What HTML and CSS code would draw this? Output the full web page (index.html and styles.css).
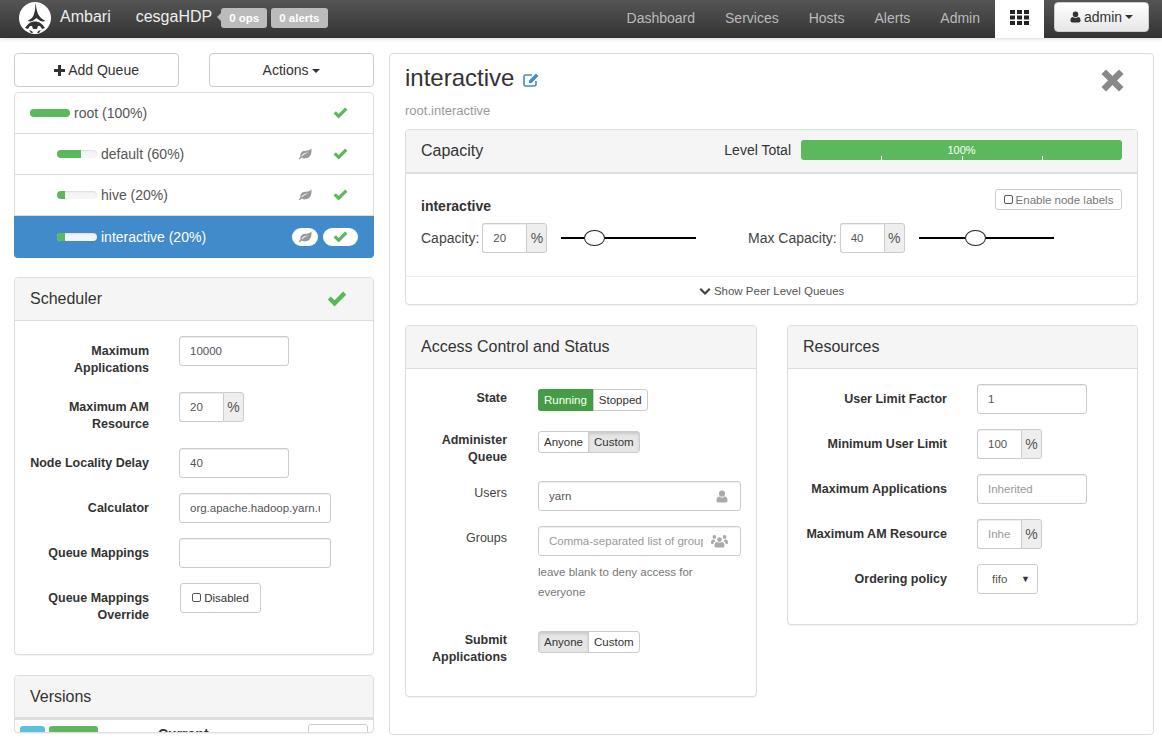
FILE: index.html
```html
<!DOCTYPE html>
<html lang="en">
<head>
  <meta charset="UTF-8">
  <title>Ambari - Capacity Scheduler</title>
  <link rel="stylesheet" href="styles.css">
</head>
<body>

  <svg class="defs" width="0" height="0">
    <symbol id="i-check" viewBox="0 0 16 13"><path d="M0.5 7l2.5-2.5 3 3 7-7L15.5 3 6 12.5z"/></symbol>
    <symbol id="i-leaf" viewBox="0 0 16 14"><path d="M15.5 0.5c0.6 5-0.8 11-7 11.6-1.7 0.2-3.3-0.3-4.4-1L2 13.2 0.6 12.2l2.2-2.4C1.8 7.5 3.5 4.3 6.6 3.6c3.2-0.7 6.6-0.4 8.9-3.1zM4.6 9.6c2-2.2 4.2-3.4 7-4.2-3-0.1-5.7 1.2-7.8 3.5z"/></symbol>
    <symbol id="i-user" viewBox="0 0 12 13"><path d="M6 0.5a3 3 0 0 1 3 3.2 3 3 0 0 1-6 0A3 3 0 0 1 6 0.5zM3.2 6.6C4 7.3 5 7.7 6 7.7s2-0.4 2.8-1.1c1.8 0.2 2.7 1.6 2.7 3.8 0 1.4-0.8 2.1-2 2.1h-7c-1.2 0-2-0.7-2-2.1 0-2.2 0.9-3.6 2.7-3.8z"/></symbol>
    <symbol id="i-users" viewBox="0 0 17 14"><path d="M8.5 3.2a2.4 2.4 0 1 1 0 4.8 2.4 2.4 0 0 1 0-4.8zM3.4 1a1.9 1.9 0 1 1 0 3.8 1.9 1.9 0 0 1 0-3.8zM13.6 1a1.9 1.9 0 1 1 0 3.8 1.9 1.9 0 0 1 0-3.8zM6 8c0.7 0.5 1.6 0.8 2.5 0.8S10.300 8.500 11 8c1.700 0.100 2.500 1.300 2.500 3.400 0 1.400-0.800 2.100-2 2.100h-6c-1.200 0-2-0.700-2-2.100C3.500 9.300 4.300 8.100 6 8zM2.200 5.500c0.500 0.300 1.200 0.500 1.800 0.500-0.200 0.500-0.100 1 0.200 1.500C3.200 7.800 2.500 8.700 2.300 10H1.300C0.500 10 0 9.500 0 8.500 0 6.800 0.700 5.700 2.200 5.500zM14.800 5.500C16.300 5.700 17 6.800 17 8.500c0 1-0.500 1.500-1.300 1.500h-1c-0.200-1.300-0.900-2.200-1.900-2.500 0.300-0.500 0.400-1 0.200-1.500 0.600 0 1.300-0.200 1.800-0.500z"/></symbol>
    <symbol id="i-down" viewBox="0 0 12 9"><path d="M0.500 2.500L2 1l4 4 4-4 1.500 1.500L6 8z"/></symbol>
  </svg>

  <nav class="navbar">
    <svg class="logo" viewBox="0 0 32 32" width="32" height="32">
      <circle cx="16" cy="16" r="16" fill="#fff"/>
      <path d="M16.500 1l1.200 7 1.300 4c1.500 3 4 5 7.500 7-2 0.500-3.500 0.500-5 0l-4-3-4 3c-1.500 0.500-3 0.500-5 0 3.500-2 6-4 6.500-7l1-4z" fill="#333"/>
      <path d="M6 26c3-4.500 6-6.500 10-6.500S23 21.500 26 26l-3 1-2-3h-2l-1 3h-4l-1-3h-2l-2 3z" fill="#333"/>
      <path d="M10 28l3 1 1 2h-2zM22 28l-3 1-1 2h2z" fill="#444"/>
    </svg>
    <a class="brand">Ambari</a>
    <a class="cluster">cesgaHDP</a>
    <span class="ops-badge arrow">0 ops</span>
    <span class="ops-badge">0 alerts</span>

    <ul class="nav-links">
      <li><a>Dashboard</a></li>
      <li><a>Services</a></li>
      <li><a>Hosts</a></li>
      <li><a>Alerts</a></li>
      <li><a>Admin</a></li>
      <li class="active">
        <a>
          <svg class="grid-icon" viewBox="0 0 19 15" width="19" height="15">
            <path d="M0 0h5v4H0zM7 0h5v4H7zM14 0h5v4h-5zM0 5.500h5v4H0zM7 5.500h5v4H7zM14 5.500h5v4h-5zM0 11h5v4H0zM7 11h5v4H7zM14 11h5v4h-5z"/>
          </svg>
        </a>
      </li>
    </ul>
    <button class="admin-btn"><svg class="icon" width="11" height="12"><use href="#i-user"/></svg> admin <span class="caret"></span></button>
  </nav>

  <main class="page">

    <aside class="sidebar">
      <div class="queue-actions">
        <button class="btn">
          <svg class="plus" viewBox="0 0 11 11" width="11" height="11"><path d="M4 0h3v4h4v3H7v4H4V7H0V4h4z"/></svg>
          Add Queue
        </button>
        <button class="btn">Actions <span class="caret"></span></button>
      </div>

      <ul class="queue-list">
        <li class="queue">
          <span class="bar"><span class="bar-fill" style="width: 100%"></span></span>
          <span class="queue-name">root (100%)</span>
          <span class="state"><svg width="15" height="12"><use href="#i-check"/></svg></span>
        </li>
        <li class="queue child">
          <span class="bar"><span class="bar-fill" style="width: 60%"></span></span>
          <span class="queue-name">default (60%)</span>
          <span class="leaf"><svg width="14" height="12"><use href="#i-leaf"/></svg></span>
          <span class="state"><svg width="15" height="12"><use href="#i-check"/></svg></span>
        </li>
        <li class="queue child">
          <span class="bar"><span class="bar-fill" style="width: 20%"></span></span>
          <span class="queue-name">hive (20%)</span>
          <span class="leaf"><svg width="14" height="12"><use href="#i-leaf"/></svg></span>
          <span class="state"><svg width="15" height="12"><use href="#i-check"/></svg></span>
        </li>
        <li class="queue child selected">
          <span class="bar"><span class="bar-fill" style="width: 20%"></span></span>
          <span class="queue-name">interactive (20%)</span>
          <span class="leaf"><svg width="14" height="12"><use href="#i-leaf"/></svg></span>
          <span class="state"><svg width="15" height="12"><use href="#i-check"/></svg></span>
        </li>
      </ul>

      <section class="panel scheduler">
        <header class="panel-head">
          <h3>Scheduler</h3>
          <svg class="head-check" width="20" height="16"><use href="#i-check"/></svg>
        </header>
        <div class="panel-body form-scheduler">
          <div class="row">
            <label>Maximum Applications</label>
            <input class="field" type="text" value="10000">
          </div>
          <div class="row">
            <label>Maximum AM Resource</label>
            <div class="input-group"><input type="text" value="20"><span class="addon">%</span></div>
          </div>
          <div class="row">
            <label>Node Locality Delay</label>
            <input class="field" type="text" value="40">
          </div>
          <div class="row">
            <label>Calculator</label>
            <input class="field wide" type="text" value="org.apache.hadoop.yarn.util.resource.DefaultResourceCalculator">
          </div>
          <div class="row">
            <label>Queue Mappings</label>
            <input class="field wide" type="text">
          </div>
          <div class="row">
            <label>Queue Mappings Override</label>
            <button class="check-btn"><span class="box"></span>Disabled</button>
          </div>
        </div>
      </section>

      <section class="panel versions">
        <header class="panel-head thick"><h3>Versions</h3></header>
        <div class="version-row">
          <span class="tag tag-blue"></span>
          <span class="tag tag-green"></span>
          <span class="version-name">Current</span>
          <button class="version-btn"></button>
        </div>
      </section>
    </aside>

    <section class="queue-detail">
      <div class="detail-head">
        <div>
          <h1>interactive
            <svg class="edit" viewBox="0 0 16 14" width="16" height="14">
              <path d="M13 8v3.500c0 1-0.700 1.500-1.500 1.500h-9C1.500 13 1 12.400 1 11.500v-8C1 2.500 1.600 2 2.500 2H9" fill="none" stroke="#428bca" stroke-width="1.600"/>
              <path d="M13 0.500l2.500 2.500-7 7H6V7.500z" fill="#428bca"/>
            </svg>
          </h1>
          <p class="path">root.interactive</p>
        </div>
        <svg class="close" viewBox="0 0 23 23" width="23" height="23"><path d="M5 0.500l6.500 6.500L18 0.500 22.500 5 16 11.500l6.500 6.500-4.500 4.500-6.500-6.500L5 22.500 0.500 18 7 11.500 0.500 5z"/></svg>
      </div>

      <section class="panel capacity">
        <header class="panel-head capacity-head">
          <h3>Capacity</h3>
          <div class="level-total">
            <span>Level Total</span>
            <div class="level-bar">100%
              <i class="tick t1"></i><i class="tick t2"></i><i class="tick t3"></i>
            </div>
          </div>
        </header>
        <div class="capacity-body">
          <div class="capacity-title">
            <strong>interactive</strong>
            <button class="node-labels"><span class="box"></span>Enable node labels</button>
          </div>
          <div class="sliders">
            <div class="slider-group">
              <span class="slider-label">Capacity:</span>
              <div class="input-group"><input type="text" value="20"><span class="addon">%</span></div>
              <div class="slider"><span class="handle h20"></span></div>
            </div>
            <div class="slider-group second">
              <span class="slider-label">Max Capacity:</span>
              <div class="input-group"><input type="text" value="40"><span class="addon">%</span></div>
              <div class="slider"><span class="handle h40"></span></div>
            </div>
          </div>
        </div>
        <div class="peer-toggle"><svg width="12" height="9"><use href="#i-down"/></svg> Show Peer Level Queues</div>
      </section>

      <div class="detail-columns">
        <section class="panel access">
          <header class="panel-head"><h3>Access Control and Status</h3></header>
          <div class="panel-body form-access">
            <div class="row state-row">
              <label>State</label>
              <div class="toggle"><span class="on-green">Running</span><span>Stopped</span></div>
            </div>
            <div class="row">
              <label>Administer Queue</label>
              <div class="toggle"><span>Anyone</span><span class="on">Custom</span></div>
            </div>
            <div class="row">
              <label class="plain">Users</label>
              <div class="icon-input">
                <input type="text" value="yarn">
                <svg width="12" height="13"><use href="#i-user"/></svg>
              </div>
            </div>
            <div class="row">
              <label class="plain">Groups</label>
              <div>
                <div class="icon-input">
                  <input type="text" placeholder="Comma-separated list of groups">
                  <svg width="17" height="14"><use href="#i-users"/></svg>
                </div>
                <p class="help">leave blank to deny access for everyone</p>
              </div>
            </div>
            <div class="row">
              <label>Submit Applications</label>
              <div class="toggle"><span class="on">Anyone</span><span>Custom</span></div>
            </div>
          </div>
        </section>

        <section class="panel resources">
          <header class="panel-head"><h3>Resources</h3></header>
          <div class="panel-body form-resources">
            <div class="row">
              <label>User Limit Factor</label>
              <input class="field" type="text" value="1">
            </div>
            <div class="row">
              <label>Minimum User Limit</label>
              <div class="input-group"><input type="text" value="100"><span class="addon">%</span></div>
            </div>
            <div class="row">
              <label>Maximum Applications</label>
              <input class="field" type="text" placeholder="Inherited">
            </div>
            <div class="row">
              <label>Maximum AM Resource</label>
              <div class="input-group"><input type="text" placeholder="Inherited"><span class="addon">%</span></div>
            </div>
            <div class="row">
              <label>Ordering policy</label>
              <div class="select">fifo<span class="select-arrow">▼</span></div>
            </div>
          </div>
        </section>
      </div>
    </section>

  </main>

</body>
</html>
```

FILE: styles.css
```css
* {
  box-sizing: border-box;
}

html, body {
  height: 100%;
  margin: 0;
  overflow: hidden;
}

body {
  background: #fff;
  color: #333;
  font-family: "Liberation Sans", Arial, sans-serif;
  font-size: 14px;
  line-height: 20px;
}

.defs {
  position: absolute;
}

h1, h3, p, ul {
  margin: 0;
  padding: 0;
}

ul {
  list-style: none;
}

/* navbar */

.navbar {
  display: flex;
  align-items: center;
  height: 38px;
  padding-right: 13px;
  background: linear-gradient(#555, #333);
  box-shadow: 0 1px 4px rgba(0, 0, 0, 0.15);
}

.logo {
  margin: -2px 0 0 19px;
  flex: none;
}

.brand,
.cluster {
  color: #eee;
  font-size: 16px;
  margin-top: -4px;
}

.brand {
  margin-left: 9px;
}

.cluster {
  margin-left: 25px;
}

.ops-badge {
  position: relative;
  height: 20px;
  margin: -3px 0 0 4px;
  padding: 0 8px 0 8px;
  background: #bbb;
  border-radius: 3px;
  color: #fff;
  font-size: 11.5px;
  font-weight: bold;
  line-height: 20px;
}

.ops-badge.arrow {
  margin-left: 9px;
}

.ops-badge.arrow::before {
  content: "";
  position: absolute;
  left: -4px;
  top: 5px;
  border: 4px solid transparent;
  border-left: 0;
  border-right-color: #bbb;
}

.nav-links {
  display: flex;
  margin-left: auto;
}

.nav-links a {
  display: block;
  height: 38px;
  padding: 0 15px;
  color: #bbb;
  line-height: 36px;
}

.nav-links .active a {
  display: flex;
  align-items: center;
  width: 49px;
  background: #fff;
  padding-bottom: 3px;
}

.grid-icon {
  fill: #222;
}

.admin-btn {
  display: flex;
  align-items: center;
  justify-content: center;
  gap: 3px;
  width: 95px;
  height: 30px;
  margin: -5px 0 0 10px;
  background: linear-gradient(#fff, #e6e6e6);
  border: 1px solid #ccc;
  border-radius: 4px;
  color: #333;
  font: 14px "Liberation Sans", Arial, sans-serif;
}

.icon {
  fill: #333;
}

.caret {
  display: inline-block;
  border-top: 4px solid #333;
  border-left: 4px solid transparent;
  border-right: 4px solid transparent;
  vertical-align: middle;
}

/* page layout */

.page {
  display: grid;
  grid-template-columns: 360px 765px;
  gap: 15px;
  padding: 15px 0 0 14px;
  align-items: start;
}

/* panels */

.panel {
  background: #fff;
  border: 1px solid #ddd;
  border-radius: 4px;
  box-shadow: 0 1px 1px rgba(0, 0, 0, 0.05);
}

.panel-head {
  display: flex;
  align-items: center;
  justify-content: space-between;
  height: 43px;
  padding: 0 15px;
  background: #f5f5f5;
  border-bottom: 1px solid #ddd;
  border-radius: 3px 3px 0 0;
}

.panel-head.thick {
  height: 44px;
  border-bottom-width: 3px;
}

.panel-head h3 {
  font-size: 16px;
  font-weight: normal;
}

.panel-body {
  padding: 15px;
}

.row {
  display: grid;
  margin-bottom: 15px;
  align-items: start;
}

.row label {
  padding-top: 7px;
  font-size: 12.5px;
  font-weight: bold;
  line-height: 17px;
  text-align: right;
}

/* form fields */

input {
  font-family: "Liberation Sans", Arial, sans-serif;
  font-size: 11.5px;
  color: #555;
}

input::placeholder {
  color: #999;
}

.field {
  width: 110px;
  height: 30px;
  padding: 0 10px;
  border: 1px solid #ccc;
  border-radius: 3px;
  box-shadow: inset 0 1px 1px rgba(0, 0, 0, 0.075);
}

.field.wide {
  width: 152px;
}

.input-group {
  display: flex;
  width: 65px;
  height: 30px;
}

.input-group input {
  width: 44px;
  padding: 0 10px;
  border: 1px solid #ccc;
  border-right: 0;
  border-radius: 3px 0 0 3px;
  box-shadow: inset 0 1px 1px rgba(0, 0, 0, 0.075);
}

.addon {
  width: 21px;
  background: #eee;
  border: 1px solid #ccc;
  border-radius: 0 3px 3px 0;
  color: #555;
  font-size: 14px;
  line-height: 28px;
  text-align: center;
}

.box {
  display: inline-block;
  width: 9px;
  height: 9px;
  border: 1px solid #555;
  border-radius: 2px;
  margin-right: 3px;
}

.check-btn {
  width: 81px;
  height: 30px;
  margin-left: 1px;
  padding: 0;
  background: #fff;
  border: 1px solid #ccc;
  border-radius: 3px;
  color: #333;
  font: 11.5px "Liberation Sans", Arial, sans-serif;
}

.btn {
  height: 34px;
  background: #fff;
  border: 1px solid #ccc;
  border-radius: 4px;
  color: #333;
  font: 14px "Liberation Sans", Arial, sans-serif;
}

/* sidebar */

.queue-actions {
  display: grid;
  grid-template-columns: 165px 165px;
  justify-content: space-between;
  margin-bottom: 5px;
}

.plus {
  fill: #333;
  vertical-align: -1px;
}

.queue-list {
  margin-bottom: 19px;
  border: 1px solid #ddd;
  border-radius: 4px;
}

.queue {
  display: flex;
  align-items: center;
  height: 41px;
  padding-left: 15px;
  padding-right: 15px;
  border-bottom: 1px solid #ddd;
  color: #555;
}

.queue:last-child {
  border-bottom: 0;
}

.queue.child {
  padding-left: 42px;
}

.bar {
  width: 40px;
  height: 8px;
  margin-right: 4px;
  background: #f5f5f5;
  border-radius: 4px;
  overflow: hidden;
  box-shadow: inset 0 1px 2px rgba(0, 0, 0, 0.1);
}

.bar-fill {
  display: block;
  height: 100%;
  background: #5cb85c;
}

.queue-name {
  flex: 1;
}

.leaf svg {
  display: block;
  fill: #999;
}

.state svg {
  display: block;
  fill: #5cb85c;
}

.leaf {
  display: flex;
  justify-content: center;
  width: 26px;
  margin-right: 5px;
}

.state {
  display: flex;
  justify-content: center;
  width: 35px;
  margin-right: 0;
}

.queue.selected {
  height: 42px;
  margin: 0 -1px -1px;
  padding-left: 43px;
  padding-right: 16px;
  background: #428bca;
  border-radius: 0 0 4px 4px;
  color: #fff;
}

.selected .leaf,
.selected .state {
  align-items: center;
  height: 18px;
  background: #fff;
  border-radius: 9px;
}

.selected .bar {
  background: #f5f5f5;
}

.scheduler {
  margin-bottom: 20px;
}

.head-check {
  fill: #5cb85c;
  margin-right: 11px;
}

.form-scheduler .row {
  grid-template-columns: 119px auto;
  column-gap: 30px;
}

.version-row {
  display: flex;
  height: 12px;
  padding: 6px 5px 0;
  overflow: hidden;
}

.tag {
  height: 20px;
  border-radius: 3px;
}

.tag-blue {
  width: 25px;
  margin-right: 4px;
  background: #5bc0de;
}

.tag-green {
  width: 49px;
  background: #5cb85c;
}

.version-name {
  margin-left: 60px;
  font-size: 14px;
  font-weight: bold;
  line-height: 20px;
  margin-top: -2px;
}

.version-btn {
  width: 60px;
  height: 30px;
  margin: -2px 0 0 auto;
  background: #fff;
  border: 1px solid #ccc;
  border-radius: 3px;
}

/* queue detail */

.queue-detail {
  height: 682px;
  padding: 0 15px;
  border: 1px solid #ddd;
  border-radius: 4px;
}

.detail-head {
  display: flex;
  justify-content: space-between;
  height: 75px;
  padding-top: 10px;
}

.detail-head h1 {
  font-size: 24px;
  font-weight: normal;
  line-height: 27px;
}

.edit {
  margin-left: 2px;
  vertical-align: -1px;
}

.path {
  margin-top: 10px;
  color: #999;
  font-size: 13px;
}

.close {
  margin: 5px 14px 0 0;
  fill: #888;
}

/* capacity */

.capacity {
  margin-bottom: 20px;
}

.capacity-head {
  height: 44px;
  border-bottom-width: 2px;
}

.level-total {
  display: flex;
  align-items: center;
  gap: 10px;
  margin-top: -2px;
}

.level-bar {
  position: relative;
  width: 321px;
  height: 20px;
  background: #5cb85c;
  border-radius: 3px;
  color: #fff;
  font-size: 11px;
  text-align: center;
}

.tick {
  position: absolute;
  bottom: 0;
  width: 1px;
  height: 4px;
  background: #fff;
}

.t1 { left: 25%; }
.t2 { left: 50%; }
.t3 { left: 75%; }

.capacity-body {
  height: 103px;
  padding: 15px 15px 0;
  border-bottom: 1px solid #eee;
}

.capacity-title {
  display: flex;
  justify-content: space-between;
  height: 34px;
}

.capacity-title strong {
  margin-top: 7px;
}

.node-labels {
  width: 127px;
  height: 21px;
  padding: 0;
  background: #fff;
  border: 1px solid #ccc;
  border-radius: 3px;
  color: #777;
  font: 11.5px "Liberation Sans", Arial, sans-serif;
}

.sliders {
  display: flex;
}

.slider-group {
  display: flex;
  align-items: center;
  width: 327px;
}

.slider-group.second {
  width: auto;
}

.slider-label {
  margin-right: 3px;
  color: #444;
}

.slider {
  position: relative;
  width: 135px;
  height: 2px;
  margin-left: 14px;
  background: #000;
}

.handle {
  position: absolute;
  top: -7px;
  width: 21px;
  height: 16px;
  background: #fff;
  border: 1px solid #223;
  border-radius: 50%;
}

.h20 { left: 23px; }
.h40 { left: 46px; }

.peer-toggle {
  height: 27px;
  color: #555;
  font-size: 11.5px;
  line-height: 28px;
  text-align: center;
}

.peer-toggle svg {
  fill: #444;
  vertical-align: -1px;
}

/* access and resources */

.detail-columns {
  display: grid;
  grid-template-columns: 352px 351px;
  justify-content: space-between;
  align-items: start;
}

.form-access {
  padding-top: 20px;
}

.form-access .row {
  grid-template-columns: 86px 203px;
  column-gap: 31px;
}

.form-access .row label {
  padding-top: 1px;
}

.form-access .row label.plain {
  padding-top: 4px;
  font-weight: normal;
  color: #444;
}

.state-row {
  min-height: 27px;
}

.toggle {
  display: flex;
  width: max-content;
  height: 22px;
  border: 1px solid #ccc;
  border-radius: 3px;
  font-size: 11.5px;
  line-height: 20px;
}

.toggle span {
  padding: 0 5px;
}

.toggle span + span {
  border-left: 1px solid #ccc;
}

.toggle .on {
  background: #e6e6e6;
  box-shadow: inset 0 2px 3px rgba(0, 0, 0, 0.125);
}

.toggle .on-green {
  margin: -1px 0 -1px -1px;
  padding: 1px 6px;
  background: #449d44;
  border-radius: 3px 0 0 3px;
  color: #fff;
}

.icon-input {
  display: flex;
  align-items: center;
  height: 30px;
  padding: 0 10px;
  border: 1px solid #ccc;
  border-radius: 3px;
  box-shadow: inset 0 1px 1px rgba(0, 0, 0, 0.075);
}

.icon-input input {
  flex: 1;
  min-width: 0;
  padding: 0;
  border: 0;
  outline: 0;
  margin-right: 8px;
}

.icon-input svg {
  flex: none;
  fill: #aaa;
  margin-right: 2px;
}

.help {
  margin: 6px 0 14px;
  color: #777;
  font-size: 11.5px;
  width: 175px;
}

.form-resources .row {
  grid-template-columns: 144px auto;
  column-gap: 30px;
}

.select {
  display: flex;
  justify-content: space-between;
  width: 61px;
  height: 30px;
  padding: 0 7px 0 14px;
  border: 1px solid #ccc;
  border-radius: 3px;
  color: #555;
  font-size: 11.5px;
  line-height: 29px;
}

.select-arrow {
  font-size: 9px;
  color: #333;
}
```
